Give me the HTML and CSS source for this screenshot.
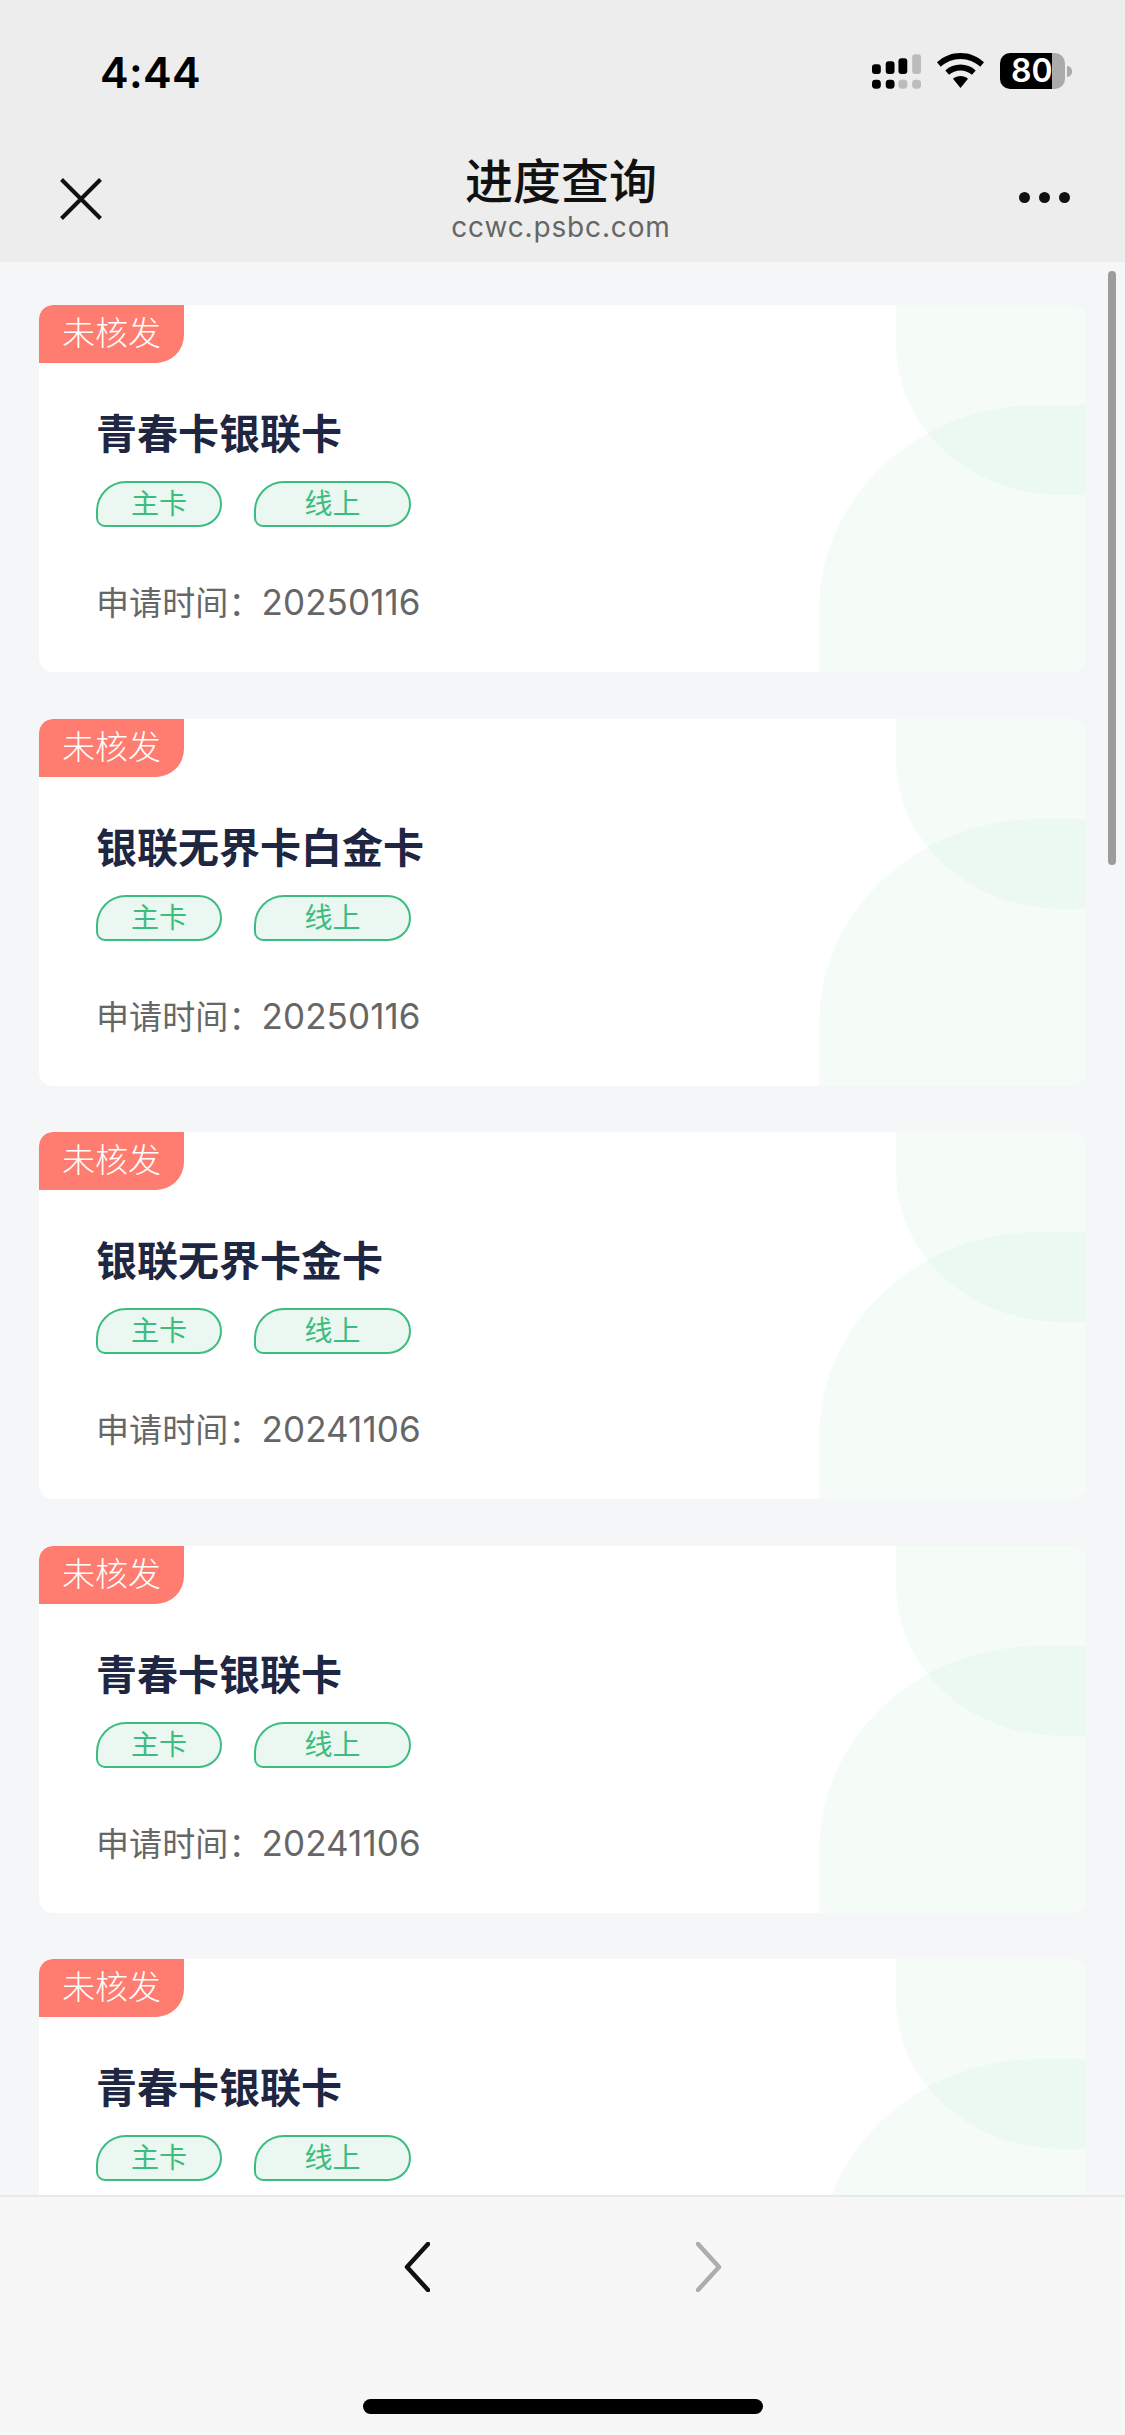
FILE: index.html
```html
<!DOCTYPE html>
<html lang="zh-CN">
<head>
<meta charset="utf-8">
<title>进度查询</title>
<link rel="stylesheet" href="styles.css">
</head>
<body>
<div class="page">
  <header class="top">
    <div class="status">
      <span class="time">4:44</span>
      <div class="status-icons">
        <svg class="signal" width="49" height="36" viewBox="0 0 50 36">
          <rect x="0" y="10" width="9" height="10" rx="3"/>
          <rect x="14" y="7" width="9" height="13" rx="3"/>
          <rect x="27" y="4" width="9" height="16" rx="3"/>
          <rect class="dim" x="41" y="0" width="9" height="20" rx="3"/>
          <rect x="0" y="26" width="9" height="9" rx="3.5"/>
          <rect x="14" y="26" width="9" height="9" rx="3.5"/>
          <rect class="dim" x="27" y="26" width="9" height="9" rx="3.5"/>
          <rect class="dim" x="41" y="26" width="9" height="9" rx="3.5"/>
        </svg>
        <svg class="wifi" width="47" height="36" viewBox="0 0 47 36">
          <path d="M23.500 0C14.500 0 6.500 3.300 0 9.300L3.700 13.800C9.200 8.900 16 6 23.500 6S37.800 8.900 43.300 13.800L47 9.300C40.500 3.300 32.500 0 23.500 0Z"/>
          <path d="M23.500 11.500C17.700 11.500 12.500 13.600 8.300 17.400L12 21.800C15.200 19 19.100 17.400 23.500 17.400S31.800 19 35 21.800L38.700 17.400C34.500 13.600 29.300 11.500 23.500 11.500Z"/>
          <path d="M23.500 23C20.700 23 18.200 24 16 25.800L23.500 35L31 25.800C28.800 24 26.300 23 23.500 23Z"/>
        </svg>
        <div class="battery">
          <div class="battery-body"><span class="battery-level">80</span></div>
          <span class="battery-nub"></span>
        </div>
      </div>
    </div>
    <nav class="nav">
      <svg class="close" width="42" height="42" viewBox="0 0 42 42"><path d="M1.500 1.500L40.500 40.500M40.500 1.500L1.500 40.500"/></svg>
      <div class="nav-title">
        <h1>进度查询</h1>
        <p>ccwc.psbc.com</p>
      </div>
      <div class="more"><i></i><i></i><i></i></div>
    </nav>
  </header>

  <main class="list">
    <article class="card">
      <span class="shape shape-top"></span><span class="shape shape-bottom"></span>
      <span class="badge">未核发</span>
      <h2>青春卡银联卡</h2>
      <div class="tags"><span class="tag tag-a">主卡</span><span class="tag tag-b">线上</span></div>
      <p class="date"><span class="date-label">申请时间：</span>20250116</p>
    </article>
    <article class="card">
      <span class="shape shape-top"></span><span class="shape shape-bottom"></span>
      <span class="badge">未核发</span>
      <h2>银联无界卡白金卡</h2>
      <div class="tags"><span class="tag tag-a">主卡</span><span class="tag tag-b">线上</span></div>
      <p class="date"><span class="date-label">申请时间：</span>20250116</p>
    </article>
    <article class="card">
      <span class="shape shape-top"></span><span class="shape shape-bottom"></span>
      <span class="badge">未核发</span>
      <h2>银联无界卡金卡</h2>
      <div class="tags"><span class="tag tag-a">主卡</span><span class="tag tag-b">线上</span></div>
      <p class="date"><span class="date-label">申请时间：</span>20241106</p>
    </article>
    <article class="card">
      <span class="shape shape-top"></span><span class="shape shape-bottom"></span>
      <span class="badge">未核发</span>
      <h2>青春卡银联卡</h2>
      <div class="tags"><span class="tag tag-a">主卡</span><span class="tag tag-b">线上</span></div>
      <p class="date"><span class="date-label">申请时间：</span>20241106</p>
    </article>
    <article class="card">
      <span class="shape shape-top"></span><span class="shape shape-bottom"></span>
      <span class="badge">未核发</span>
      <h2>青春卡银联卡</h2>
      <div class="tags"><span class="tag tag-a">主卡</span><span class="tag tag-b">线上</span></div>
    </article>
    <span class="scrollbar"></span>
  </main>

  <footer class="bottom">
    <div class="arrows">
      <svg class="arrow" width="26" height="50" viewBox="0 0 26 50"><path d="M24 2L3 25L24 48"/></svg>
      <svg class="arrow arrow-off" width="26" height="50" viewBox="0 0 26 50"><path d="M2 2L23 25L2 48"/></svg>
    </div>
    <span class="home-bar"></span>
  </footer>
</div>
</body>
</html>
```
FILE: styles.css
```css
* { box-sizing: border-box; margin: 0; padding: 0; }
html, body { width: 1125px; height: 2435px; overflow: hidden; }
body { font-family: Inter, "Noto Sans CJK SC", sans-serif; background: #f4f6f8; }
.page { display: flex; flex-direction: column; width: 1125px; height: 2435px; }

.top { flex: none; height: 262px; background: #ededed; display: flex; flex-direction: column; }
.status { display: flex; justify-content: space-between; align-items: center; height: 72px; margin-top: 36px; padding: 0 53px 0 100px; }
.time { font-size: 43px; font-weight: 600; line-height: 1; color: #000; letter-spacing: 0.3px; }
.status-icons { display: flex; align-items: center; gap: 16px; }
.signal { fill: #000; }
.signal .dim { fill: #bcbcbc; }
.wifi { fill: #000; margin-top: -2px; }
.battery { display: flex; align-items: center; gap: 2px; margin-top: -2px; }
.battery-body { width: 65px; height: 36px; border-radius: 10px; background: linear-gradient(90deg, #000 80%, #ababab 80%); display: flex; align-items: center; padding-left: 11px; }
.battery-level { font-size: 32px; font-weight: 600; color: #fff; line-height: 1; letter-spacing: 0; }
.battery-nub { width: 5px; height: 11px; background: #ababab; border-radius: 0 5px 5px 0; }

.nav { display: grid; grid-template-columns: 1fr auto 1fr; align-items: start; padding: 52px 63px 0 60px; }
.close { margin-top: 18px; fill: none; stroke: #111; stroke-width: 4; }
.nav-title { text-align: center; margin-top: -7px; }
.nav-title h1 { font-size: 48px; font-weight: 500; line-height: 50px; color: #111; font-family: "Noto Sans CJK SC", sans-serif; }
.nav-title p { font-family: Inter, sans-serif; font-size: 28px; line-height: 30px; color: #666; letter-spacing: 0.85px; margin-top: 9px; }
.more { justify-self: end; display: flex; gap: 9px; margin-top: 32px; margin-right: -8px; }
.more i { width: 11px; height: 11px; border-radius: 50%; background: #111; }

.list { position: relative; flex: 1 1 0; min-height: 0; overflow: hidden; padding: 43px 39px 0; display: flex; flex-direction: column; gap: 46.5px; }
.scrollbar { position: absolute; top: 9px; right: 9px; width: 8px; height: 594px; border-radius: 4px; background: #9c9c9c; }

.card { position: relative; flex: none; height: 367px; background: #fff; border-radius: 14px; overflow: hidden; padding: 98px 0 0 57px; }
.shape { position: absolute; right: 0; background: rgba(60, 189, 127, 0.05); }
.shape-top { top: 0; width: 190px; height: 190px; border-radius: 0 0 0 165px / 0 0 0 150px; }
.shape-bottom { top: 100px; bottom: 0; width: 267px; border-radius: 220px 0 0 0 / 205px 0 0 0; }
.badge { position: absolute; top: 0; left: 0; width: 145px; height: 58px; background: #ff7c70; color: #fff; font-size: 33px; line-height: 53px; text-align: center; border-radius: 14px 0 28px 0; font-family: "Noto Sans CJK SC", sans-serif; font-weight: 300; }
.card h2 { position: relative; font-family: "Noto Sans CJK SC", sans-serif; font-size: 41px; font-weight: 700; line-height: 56px; color: #1e2642; }
.tags { position: relative; display: flex; gap: 32px; margin-top: 22px; }
.tag { height: 46px; border: 2px solid #3cbd7f; background: #ebf7f1; color: #3cbd7f; font-family: "Noto Sans CJK SC", sans-serif; font-size: 28px; line-height: 39px; text-align: center; border-radius: 30px 23px 23px 9px; }
.tag-a { width: 126px; }
.tag-b { width: 157px; }
.date { position: relative; font-size: 35px; line-height: 46px; color: #666; margin-top: 51px; letter-spacing: 0.1px; font-weight: 400; }
.date-label { font-family: "Noto Sans CJK SC", sans-serif; font-size: 33px; font-weight: 400; }

.bottom { flex: none; height: 240px; background: #f7f7f7; border-top: 2px solid #e9e9e9; display: flex; flex-direction: column; align-items: center; position: relative; z-index: 1; }
.arrows { display: flex; gap: 266px; margin-top: 45px; }
.arrow { fill: none; stroke: #111; stroke-width: 4.500; stroke-linecap: round; stroke-linejoin: round; }
.arrow-off { stroke: #adadad; }
.home-bar { margin-top: 107px; width: 400px; height: 15px; border-radius: 8px; background: #000; }
```
